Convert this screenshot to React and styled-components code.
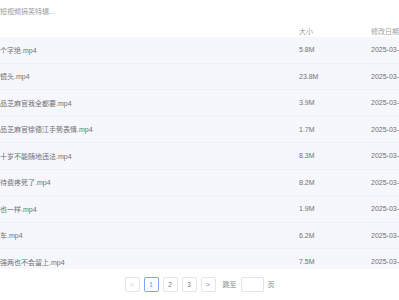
import React from "react";
import styled, { createGlobalStyle } from "styled-components";

const files = [
  { name: "个字绝.mp4", size: "5.8M" },
  { name: "镜头.mp4", size: "23.8M" },
  { name: "品芝麻官我全都要.mp4", size: "3.9M" },
  { name: "品芝麻官徐德江手势表情.mp4", size: "1.7M" },
  { name: "十岁不能随地违法.mp4", size: "8.3M" },
  { name: "待费疼死了.mp4", size: "8.2M" },
  { name: "也一样.mp4", size: "1.9M" },
  { name: "车.mp4", size: "6.2M" },
  { name: "强两也不会留上.mp4", size: "7.5M" },
];

export default function App() {
  return (
    <>
      <GlobalStyle />
      <Page>
        <Title>短视频搞笑特辑...</Title>
        <HeadRow>
          <Cell />
          <Cell>大小</Cell>
          <Cell>修改日期</Cell>
        </HeadRow>
        <Body>
          {files.map((f, i) => (
            <Row key={i}>
              <Cell>{f.name}</Cell>
              <Cell>{f.size}</Cell>
              <Cell>2025-03-0</Cell>
            </Row>
          ))}
        </Body>
        <Pager>
          <PageBtn disabled>&lt;</PageBtn>
          <PageBtn active>1</PageBtn>
          <PageBtn>2</PageBtn>
          <PageBtn>3</PageBtn>
          <PageBtn>&gt;</PageBtn>
          <JumpLabel>跳至</JumpLabel>
          <JumpInput />
          <JumpLabel>页</JumpLabel>
        </Pager>
      </Page>
    </>
  );
}

const GlobalStyle = createGlobalStyle`
  body {
    margin: 0;
    background: #fff;
    font-family: "Liberation Sans", "Noto Sans CJK SC", sans-serif;
  }
`;

const Page = styled.div`
  width: 399px;
  height: 300px;
  overflow: hidden;
  display: flex;
  flex-direction: column;
`;

const Title = styled.div`
  height: 24px;
  line-height: 24px;
  font-size: 7px;
  color: #9a9a9a;
  white-space: nowrap;
`;

const Grid = styled.div`
  display: grid;
  grid-template-columns: 299px 72px 28px;
  align-items: center;
  white-space: nowrap;
`;

const HeadRow = styled(Grid)`
  height: 13px;
  font-size: 7px;
  color: #a0a0a0;
`;

const Body = styled.div`
  height: 232px;
  overflow: hidden;
  background: #f6f7fd;
`;

const Row = styled(Grid)`
  height: 26.5px;
  font-size: 7px;
  color: #707070;
  border-bottom: 1px solid #f0f1f8;
  box-sizing: border-box;
`;

const Cell = styled.div`
  overflow: hidden;
`;

const Pager = styled.div`
  flex: 1;
  display: flex;
  align-items: center;
  justify-content: center;
  gap: 4px;
  padding-bottom: 1px;
  padding-left: 3px;
`;

const PageBtn = styled.div`
  width: 15px;
  height: 15px;
  box-sizing: border-box;
  border: 1px solid ${(p) => (p.active ? "#7ea4f6" : "#e4e5ea")};
  border-radius: 2px;
  display: flex;
  align-items: center;
  justify-content: center;
  font-size: 6.5px;
  color: ${(p) => (p.active ? "#5b8def" : p.disabled ? "#c8c8cc" : "#777")};
  background: #fff;
`;

const JumpLabel = styled.span`
  font-size: 7px;
  color: #888;
  margin: 0 3px;
`;

const JumpInput = styled.div`
  width: 23px;
  height: 15px;
  box-sizing: border-box;
  border: 1px solid #e2e3e8;
  border-radius: 2px;
  margin: 0 -3px;
`;
